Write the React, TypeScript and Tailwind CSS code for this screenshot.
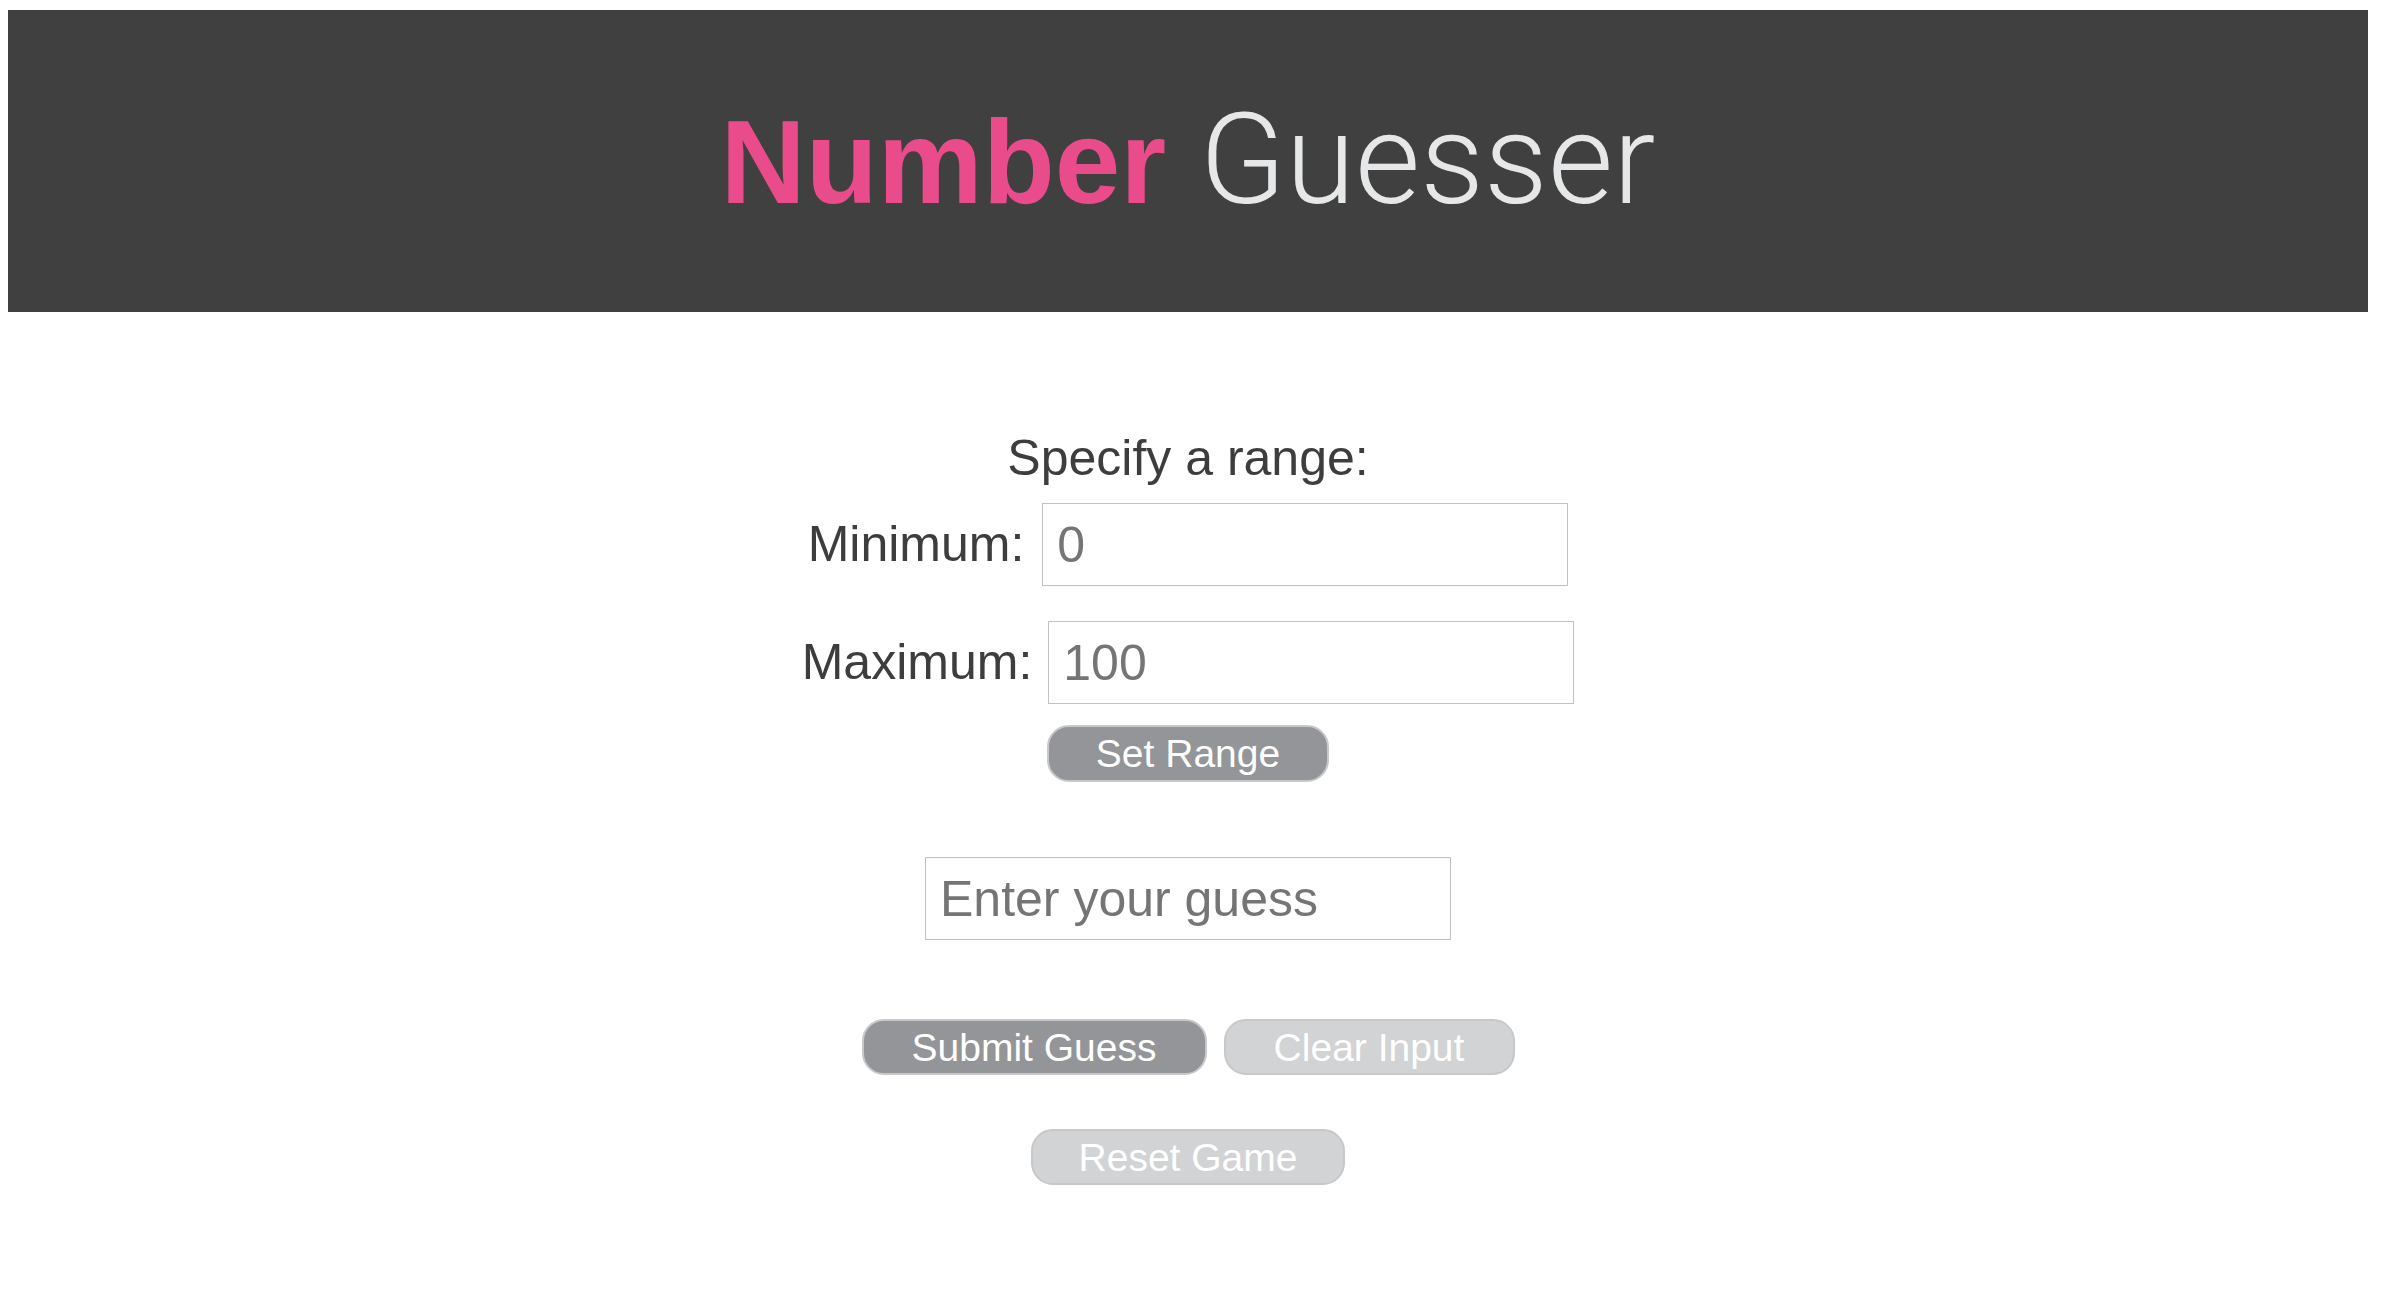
import { useState } from "react";

const font = "font-['Liberation_Sans',Arial,sans-serif]";

export default function App() {
  const [min, setMin] = useState("");
  const [max, setMax] = useState("");
  const [guess, setGuess] = useState("");

  return (
    <div className={`min-h-screen bg-white ${font}`}>
      <header className="ml-[8px] mr-[14px] mt-[10px] flex h-[302px] items-center justify-center bg-[#404040]">
        <h1 className="text-[120px] leading-[120px]">
          <span className="text-[118px] font-bold text-[#ea4b8b]">Number</span>{" "}
          <span className="font-['Roboto',sans-serif] text-[126px] font-light text-[#e6e7e8]">Guesser</span>
        </h1>
      </header>

      <main className="flex flex-col items-center pr-[6px] text-[#3d3d3d]">
        <p className="mt-[121px] h-[50px] text-[50px] leading-[50px]">Specify a range:</p>

        <div className="mt-[20px] flex items-center gap-[18px]">
          <label className="text-[50px] leading-[83px]">Minimum:</label>
          <input
            value={min}
            onChange={(e) => setMin(e.target.value)}
            placeholder="0"
            className="h-[83px] w-[526px] border border-[#c2c2c2] px-[14px] text-[50px] outline-none placeholder:text-[#757575]"
          />
        </div>

        <div className="mt-[35px] flex items-center gap-[16px]">
          <label className="text-[50px] leading-[83px]">Maximum:</label>
          <input
            value={max}
            onChange={(e) => setMax(e.target.value)}
            placeholder="100"
            className="h-[83px] w-[526px] border border-[#c2c2c2] px-[14px] text-[50px] outline-none placeholder:text-[#757575]"
          />
        </div>

        <button className="mt-[21px] h-[57px] w-[282px] rounded-[22px] border-2 border-[#c7c8ca] bg-[#939598] text-[39px] leading-none text-white">
          Set Range
        </button>

        <input
          value={guess}
          onChange={(e) => setGuess(e.target.value)}
          placeholder="Enter your guess"
          className="mt-[75px] h-[83px] w-[526px] border border-[#c2c2c2] px-[14px] text-[50px] outline-none placeholder:text-[#757575]"
        />

        <div className="mt-[79px] flex gap-[17px]">
          <button className="h-[56px] w-[345px] rounded-[22px] border-2 border-[#c7c8ca] bg-[#939598] text-[39px] leading-none text-white">
            Submit Guess
          </button>
          <button className="h-[56px] w-[291px] rounded-[22px] border-2 border-[#c7c8ca] bg-[#d1d3d4] text-[39px] leading-none text-white">
            Clear Input
          </button>
        </div>

        <button className="mt-[54px] h-[56px] w-[314px] rounded-[22px] border-2 border-[#c7c8ca] bg-[#d1d3d4] text-[39px] leading-none text-white">
          Reset Game
        </button>
      </main>
    </div>
  );
}
